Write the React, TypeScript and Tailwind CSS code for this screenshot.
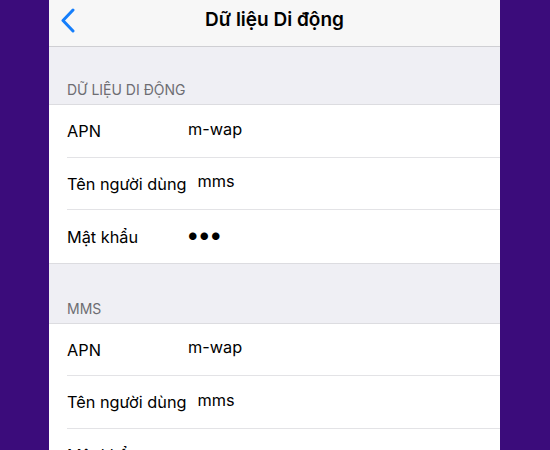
const sections = [
  {
    title: "DỮ LIỆU DI ĐỘNG",
    rows: [
      { label: "APN", value: "m-wap" },
      { label: "Tên người dùng", value: "mms" },
      { label: "Mật khẩu", value: "•••" },
    ],
  },
  {
    title: "MMS",
    rows: [
      { label: "APN", value: "m-wap" },
      { label: "Tên người dùng", value: "mms" },
      { label: "Mật khẩu", value: "•••" },
    ],
  },
];

export default function App() {
  return (
    <div className="flex h-[450px] w-[550px] overflow-hidden bg-[#3b0c7b] font-['Inter',sans-serif]">
      <div className="ml-[49px] flex w-[451px] flex-col bg-[#efeff4]">
        <header className="relative flex h-[47px] shrink-0 items-center justify-center border-b border-[#cfcfd3] bg-[#f7f7f7]">
          <svg
            className="absolute left-[11px] top-[8px]"
            width="16"
            height="25"
            viewBox="0 0 16 25"
            fill="none"
          >
            <path
              d="M13 2 L3 12.5 L13 23"
              stroke="#157efb"
              strokeWidth="3"
              strokeLinecap="round"
              strokeLinejoin="round"
            />
          </svg>
          <h1 className="-mt-[6px] text-[19px] font-semibold text-black">Dữ liệu Di động</h1>
        </header>

        {sections.map((s, i) => (
          <section key={i} className="shrink-0">
            <p className={`px-[18px] pb-[4px] text-[14px] leading-[20px] text-[#6d6d72] ${i === 0 ? "pt-[33px]" : "pt-[35px]"}`}>
              {s.title}
            </p>
            <div className="border-y border-[#dcdce0] bg-white">
              {s.rows.map((r, j) => (
                <div key={j} className="flex h-[52.5px] items-stretch pl-[18px]">
                  <div
                    className={`flex flex-1 items-center ${j < s.rows.length - 1 ? "border-b border-[#e3e3e6]" : ""}`}
                  >
                    <span className="mr-[11px] min-w-[110px] shrink-0 whitespace-nowrap pt-[1px] text-[16.3px] text-black">
                      {r.label}
                    </span>
                    <span
                      className={`whitespace-nowrap text-black ${r.value === "•••" ? "-ml-[2px] -mt-[2px] text-[24px] leading-none tracking-[-2px]" : "-mt-[4px] text-[16.3px]"}`}
                    >
                      {r.value}
                    </span>
                  </div>
                </div>
              ))}
            </div>
          </section>
        ))}
      </div>
    </div>
  );
}
